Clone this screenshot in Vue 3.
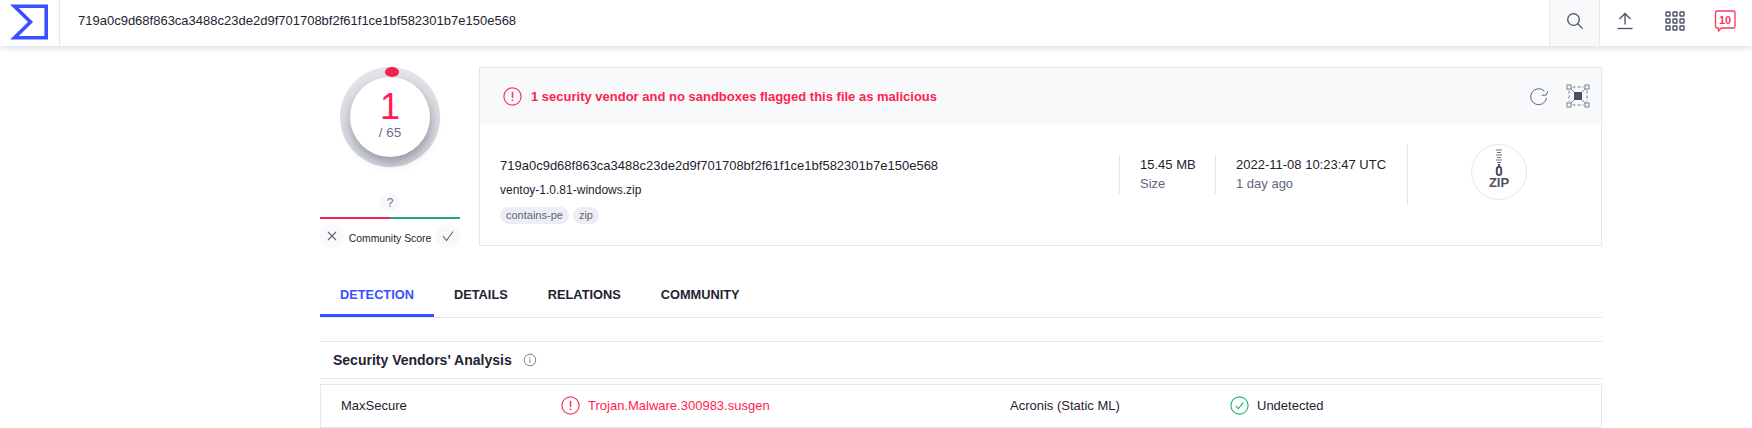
<script setup>
const tabs = ['DETECTION', 'DETAILS', 'RELATIONS', 'COMMUNITY'];
const hash = '719a0c9d68f863ca3488c23de2d9f701708bf2f61f1ce1bf582301b7e150e568';
const tags = ['contains-pe', 'zip'];
</script>

<template>
  <div class="page">
    <header class="nav">
      <div class="logo">
        <svg width="41" height="36" viewBox="0 0 41 36">
          <path d="M6.5 2.2H38.2V33.8H6.5L22.5 18Z" fill="none" stroke="#3a4fff" stroke-width="3.6" />
        </svg>
      </div>
      <div class="search-text">{{ hash }}</div>
      <div class="nav-btn search-btn">
        <svg width="18" height="18" viewBox="0 0 18 18" fill="none" stroke="#4b5163" stroke-width="1.3">
          <circle cx="7.5" cy="7.5" r="5.8" />
          <path d="M11.8 11.8L16.6 16.6" />
        </svg>
      </div>
      <div class="nav-btn">
        <svg width="18" height="18" viewBox="0 0 18 18" fill="none" stroke="#4b5163" stroke-width="1.3">
          <path d="M9 12.5V1.5M3.5 7L9 1.5L14.5 7" />
          <path d="M1.5 16.5H16.5" />
        </svg>
      </div>
      <div class="nav-btn">
        <svg width="20" height="20" viewBox="0 0 20 20" fill="none" stroke="#4b5163" stroke-width="1.4">
          <g v-for="r in 3" :key="r">
            <rect v-for="c in 3" :key="c" :x="(c - 1) * 7 + 1" :y="(r - 1) * 7 + 1" width="4" height="4" rx="0.6" />
          </g>
        </svg>
      </div>
      <div class="nav-btn">
        <svg width="22" height="22" viewBox="0 0 22 22" fill="none">
          <path d="M3 1H19.5A1.5 1.5 0 0 1 21 2.5V16.5A1.5 1.5 0 0 1 19.5 18H7.5L4.5 21V18H3A1.5 1.5 0 0 1 1.5 16.5V2.5A1.5 1.5 0 0 1 3 1Z" stroke="#f9365f" stroke-width="1.3" />
          <text x="11" y="14" text-anchor="middle" class="chat-num">10</text>
        </svg>
      </div>
    </header>

    <main class="main">
      <section class="summary">
        <div class="score-col">
          <div class="ring">
            <span class="ring-dot"></span>
            <div class="ring-inner">
              <div class="ring-num">1</div>
              <div class="ring-total">/ 65</div>
            </div>
          </div>
          <div class="question">?</div>
          <div class="score-bar"></div>
          <div class="vote-row">
            <span class="vote">
              <svg width="12" height="12" viewBox="0 0 12 12" fill="none" stroke="#5f6679" stroke-width="1.1"><path d="M2 2L10 10M10 2L2 10" /></svg>
            </span>
            <span class="vote-label">Community Score</span>
            <span class="vote">
              <svg width="14" height="12" viewBox="0 0 14 12" fill="none" stroke="#5f6679" stroke-width="1.1"><path d="M2 6L5.5 10.5L12 1.5" /></svg>
            </span>
          </div>
        </div>

        <div class="card">
          <div class="card-head">
            <svg class="alert" width="19" height="19" viewBox="0 0 19 19" fill="none" stroke="#f9365f" stroke-width="1.2">
              <circle cx="9.5" cy="9.5" r="8.6" />
              <path d="M9.5 4.8V11M9.5 12.6V14" stroke-width="1.5" />
            </svg>
            <span class="head-text">1 security vendor and no sandboxes flagged this file as malicious</span>
            <svg class="refresh" width="20" height="20" viewBox="0 0 20 20" fill="none" stroke="#5f6679" stroke-width="1">
              <path d="M15.5 5.2A8 8 0 1 0 17.6 12" />
              <path d="M12.8 9.2L17.2 9.2L18.8 5.2" />
            </svg>
            <svg class="select" width="24" height="24" viewBox="0 0 24 24" fill="none" stroke="#6a7186" stroke-width="0.9">
              <rect x="1" y="1" width="4" height="4" />
              <rect x="19" y="1" width="4" height="4" />
              <rect x="1" y="19" width="4" height="4" />
              <rect x="19" y="19" width="4" height="4" />
              <path d="M6.5 3H17.5M6.5 21H17.5M3 6.5V17.5M21 6.5V17.5" stroke-dasharray="3 2" />
              <path d="M5 5L9 9M19 5L15 9M5 19L9 15M19 19L15 15" />
              <rect x="8" y="8" width="8" height="8" fill="#4b5163" stroke="none" />
            </svg>
          </div>
          <div class="card-body">
            <div class="file-info">
              <div class="file-hash">{{ hash }}</div>
              <div class="file-name">ventoy-1.0.81-windows.zip</div>
              <div class="tags">
                <span v-for="t in tags" :key="t" class="tag">{{ t }}</span>
              </div>
            </div>
            <div class="stat size-stat">
              <div class="stat-value">15.45 MB</div>
              <div class="stat-label">Size</div>
            </div>
            <div class="stat date-stat">
              <div class="stat-value">2022-11-08 10:23:47 UTC</div>
              <div class="stat-label">1 day ago</div>
            </div>
            <div class="file-type">
              <div class="zip-circle">
                <svg class="zip-icon" width="12" height="27" viewBox="0 0 12 27" fill="none" stroke="#6a7186">
                  <path d="M3 1H9M4 3.5H8M3 6H9M4 8.5H8M3 11H9M4 13.5H8" stroke-width="1" />
                  <rect x="3.8" y="18" width="4.4" height="8" rx="2.2" stroke="#4b5163" stroke-width="2" />
                  <path d="M6 15V18" stroke="#4b5163" stroke-width="2" />
                </svg>
                <span class="zip-text">ZIP</span>
              </div>
            </div>
          </div>
        </div>
      </section>

      <nav class="tabs">
        <div v-for="(t, i) in tabs" :key="t" class="tab" :class="{ active: i === 0 }">{{ t }}</div>
      </nav>

      <div class="section-title">
        <span>Security Vendors' Analysis</span>
        <svg width="14" height="14" viewBox="0 0 14 14" fill="none" stroke="#7a8094" stroke-width="1">
          <circle cx="7" cy="7" r="5.8" />
          <path d="M7 6.2V10M7 4V5.2" />
        </svg>
      </div>

      <div class="vendor-row">
        <span>MaxSecure</span>
        <span class="result bad">
          <svg width="19" height="19" viewBox="0 0 19 19" fill="none" stroke="#f9365f" stroke-width="1.2">
            <circle cx="9.5" cy="9.5" r="8.6" />
            <path d="M9.5 4.8V11M9.5 12.6V14" stroke-width="1.5" />
          </svg>
          Trojan.Malware.300983.susgen
        </span>
        <span class="second-vendor">Acronis (Static ML)</span>
        <span class="result">
          <svg width="19" height="19" viewBox="0 0 19 19" fill="none" stroke="#22b573" stroke-width="1.1">
            <circle cx="9.5" cy="9.5" r="8.6" />
            <path d="M5.8 9.8L8.4 12.6L13.4 6.4" />
          </svg>
          Undetected
        </span>
      </div>
    </main>
  </div>
</template>

<style>
html, body {
  background: #fff;
  overflow: hidden;
}
</style>

<style scoped>
.page {
  width: 1752px;
  height: 428px;
  overflow: hidden;
  font-family: "Liberation Sans", Arial, sans-serif;
  font-size: 13px;
  color: #1f2330;
}

.nav {
  display: flex;
  align-items: stretch;
  height: 46px;
  padding-right: 2px;
  background: #fff;
  box-shadow: 0 2px 6px rgba(40, 45, 60, 0.16);
}

.logo {
  width: 60px;
  box-sizing: border-box;
  padding: 4px 0 0 8px;
  border-right: 1px solid #e6e7eb;
}

.search-text {
  flex: 1;
  padding-left: 18px;
  line-height: 42px;
}

.nav-btn {
  width: 50px;
  display: flex;
  align-items: center;
  justify-content: center;
  padding-bottom: 4px;
}

.search-btn {
  width: 51px;
  box-sizing: border-box;
  background: #f8f9fb;
  border-left: 1px solid #e6e7eb;
  border-right: 1px solid #e6e7eb;
}

.chat-num {
  font-size: 11px;
  font-weight: 700;
  fill: #f9365f;
}

.main {
  width: 1282px;
  margin-left: 320px;
}

.summary {
  display: flex;
  gap: 19px;
  padding-top: 21px;
}

.score-col {
  width: 140px;
  flex: none;
  display: flex;
  flex-direction: column;
  align-items: center;
}

.ring {
  position: relative;
  width: 100px;
  height: 100px;
  border-radius: 50%;
  background: linear-gradient(180deg, #e4e5ea 0%, #d3d5dc 100%);
  display: flex;
  align-items: center;
  justify-content: center;
}

.ring-dot {
  position: absolute;
  top: 0;
  left: 45px;
  width: 14px;
  height: 10px;
  border-radius: 50%;
  background: #f0244f;
  z-index: 1;
}

.ring-inner {
  width: 80px;
  height: 80px;
  border-radius: 50%;
  background: #fff;
  box-shadow: 1px 5px 11px rgba(40, 45, 60, 0.38);
  text-align: center;
}

.ring-num {
  margin-top: 12px;
  font-size: 36px;
  line-height: 36px;
  color: #ff1e4f;
}

.ring-total {
  font-size: 13.5px;
  line-height: 16px;
  color: #6a7186;
}

.question {
  margin-top: 26px;
  width: 20px;
  height: 20px;
  border-radius: 50%;
  background: #f8f9fb;
  text-align: center;
  line-height: 20px;
  font-size: 12px;
  color: #6a7186;
}

.score-bar {
  width: 140px;
  height: 2px;
  margin-top: 4px;
  background: linear-gradient(90deg, #f0244f 50%, #22aa6b 50%);
}

.vote-row {
  width: 140px;
  margin-top: 5px;
  display: flex;
  align-items: center;
  justify-content: space-between;
}

.vote {
  width: 24px;
  height: 24px;
  border-radius: 50%;
  background: #f8f9fb;
  display: flex;
  align-items: center;
  justify-content: center;
}

.vote-label {
  font-size: 10.4px;
  padding-top: 5px;
}

.card {
  flex: 1;
  height: 179px;
  box-sizing: border-box;
  border: 1px solid #e6e7eb;
}

.card-head {
  height: 56px;
  background: #f8f9fb;
  display: flex;
  align-items: center;
  padding: 0 11px 0 23px;
}

.head-text {
  margin-left: 9px;
  flex: 1;
  font-weight: 700;
  color: #ff1e4f;
}

.refresh {
  margin-right: 17px;
}

.card-body {
  display: flex;
  height: 121px;
  box-sizing: border-box;
  padding-top: 20px;
}

.file-info {
  width: 639px;
  padding-left: 20px;
  box-sizing: border-box;
}

.file-hash {
  line-height: 16px;
  margin-top: 14px;
}

.file-name {
  font-size: 12px;
  line-height: 16px;
  margin-top: 8px;
}

.tags {
  display: flex;
  gap: 4px;
  margin-top: 9px;
}

.tag {
  height: 17px;
  line-height: 17px;
  padding: 0 6px;
  border-radius: 9px;
  background: #eceef4;
  font-size: 11px;
  color: #5f6679;
}

.stat {
  box-sizing: border-box;
  height: 39px;
  margin-top: 11px;
  border-left: 1px solid #e6e7eb;
  padding-left: 20px;
  line-height: 19px;
}

.size-stat {
  width: 96px;
}

.date-stat {
  width: 192px;
}

.stat-label {
  color: #5f6679;
}

.file-type {
  flex: 1;
  height: 61px;
  border-left: 1px solid #e6e7eb;
  display: flex;
  justify-content: center;
  padding-right: 11px;
}

.zip-circle {
  width: 56px;
  height: 56px;
  box-sizing: border-box;
  border: 1px solid #e6e7eb;
  border-radius: 50%;
  display: flex;
  flex-direction: column;
  align-items: center;
  padding-top: 4px;
}

.zip-icon {
  flex: none;
}

.zip-text {
  font-size: 13px;
  font-weight: 700;
  line-height: 13px;
  color: #4b5163;
}

.tabs {
  display: flex;
  margin-top: 22px;
  height: 47px;
  border-bottom: 1px solid #e6e7eb;
}

.tab {
  padding: 1px 20px 0;
  font-size: 12.8px;
  font-weight: 700;
  line-height: 47px;
  height: 47px;
  box-sizing: border-box;
}

.tab.active {
  color: #3a4fff;
  border-bottom: 3px solid #3a4fff;
}

.section-title {
  margin-top: 23px;
  height: 38px;
  box-sizing: border-box;
  padding-left: 13px;
  display: flex;
  align-items: center;
  gap: 11px;
  font-size: 14px;
  font-weight: 700;
  border-top: 1px solid #e6e7eb;
  border-bottom: 1px solid #e6e7eb;
}

.vendor-row {
  margin-top: 5px;
  height: 44px;
  box-sizing: border-box;
  padding: 0 0 2px 20px;
  border: 1px solid #e6e7eb;
  display: grid;
  grid-template-columns: 220px 448px 221px 1fr;
  align-items: center;
}

.second-vendor {
  margin-left: 1px;
}

.result {
  display: flex;
  align-items: center;
  gap: 8px;
}

.result.bad {
  color: #ff1e4f;
}
</style>
